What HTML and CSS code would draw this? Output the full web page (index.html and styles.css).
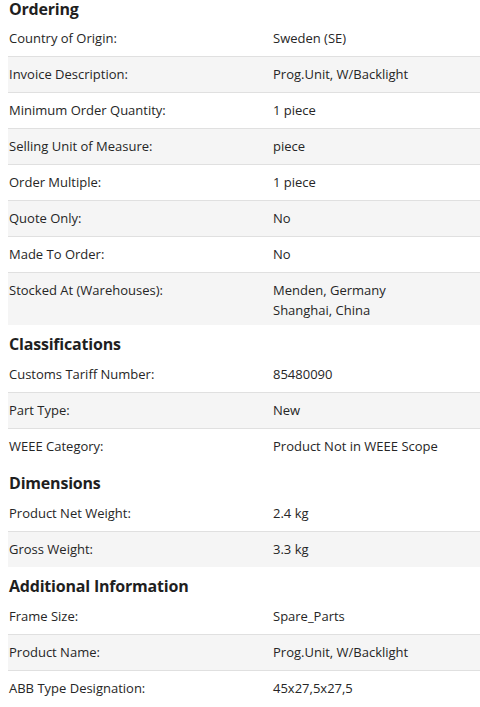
FILE: index.html
```html
<!DOCTYPE html>
<html lang="en">
<head>
<meta charset="utf-8">
<title>Product details</title>
<link rel="stylesheet" href="styles.css">
</head>
<body>
<section class="section first">
  <h2 class="heading">Ordering</h2>
  <div class="row"><div class="label">Country of Origin:</div><div class="value">Sweden (SE)</div></div>
  <div class="row alt"><div class="label">Invoice Description:</div><div class="value">Prog.Unit, W/Backlight</div></div>
  <div class="row"><div class="label">Minimum Order Quantity:</div><div class="value">1 piece</div></div>
  <div class="row alt"><div class="label">Selling Unit of Measure:</div><div class="value">piece</div></div>
  <div class="row"><div class="label">Order Multiple:</div><div class="value">1 piece</div></div>
  <div class="row alt"><div class="label">Quote Only:</div><div class="value">No</div></div>
  <div class="row"><div class="label">Made To Order:</div><div class="value">No</div></div>
  <div class="row alt"><div class="label">Stocked At (Warehouses):</div><div class="value"><div>Menden, Germany</div><div>Shanghai, China</div></div></div>
</section>
<section class="section">
  <h2 class="heading">Classifications</h2>
  <div class="row"><div class="label">Customs Tariff Number:</div><div class="value">85480090</div></div>
  <div class="row alt"><div class="label">Part Type:</div><div class="value">New</div></div>
  <div class="row"><div class="label">WEEE Category:</div><div class="value">Product Not in WEEE Scope</div></div>
</section>
<section class="section">
  <h2 class="heading">Dimensions</h2>
  <div class="row"><div class="label">Product Net Weight:</div><div class="value">2.4 kg</div></div>
  <div class="row alt"><div class="label">Gross Weight:</div><div class="value">3.3 kg</div></div>
</section>
<section class="section">
  <h2 class="heading">Additional Information</h2>
  <div class="row"><div class="label">Frame Size:</div><div class="value">Spare_Parts</div></div>
  <div class="row alt"><div class="label">Product Name:</div><div class="value">Prog.Unit, W/Backlight</div></div>
  <div class="row"><div class="label">ABB Type Designation:</div><div class="value">45x27,5x27,5</div></div>
</section>
</body>
</html>
```
FILE: styles.css
```css
html, body {
  overflow: hidden;
}
body {
  margin: 0 0 0 8px;
  background: #ffffff;
  color: #262626;
  font-family: "Open Sans", "Noto Sans", sans-serif;
  font-size: 13px;
}
.heading {
  margin: 0;
  padding: 10px 0 4px 1px;
  font-size: 16px;
  font-weight: 700;
  line-height: 18px;
  color: #1f1f1f;
  letter-spacing: -0.2px;
}
.first .heading {
  padding: 0 0 3px 1px;
}
.row {
  display: grid;
  grid-template-columns: 264px 1fr;
  align-items: start;
  min-height: 23px;
  padding: 7px 0 5px;
  line-height: 20px;
  border-bottom: 1px solid #e0e0e0;
}
.row:last-child {
  border-bottom: none;
}
.row.alt {
  background: #f5f5f5;
}
.label {
  padding-left: 1px;
}
.value {
  padding-left: 1px;
}
```
